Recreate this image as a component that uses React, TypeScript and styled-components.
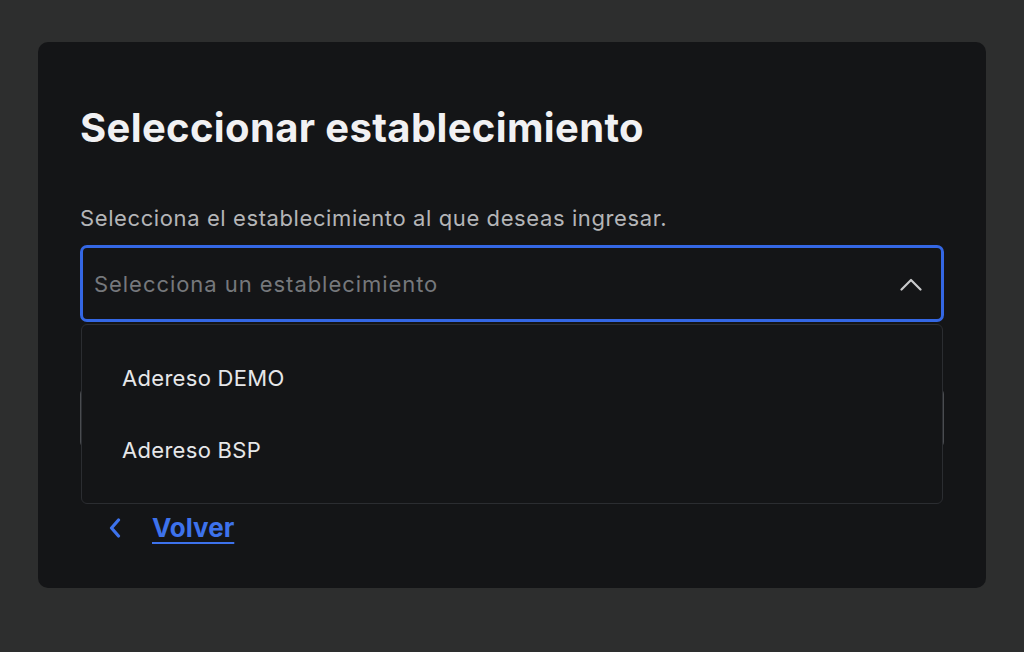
import React, { useState } from 'react'
import styled, { createGlobalStyle } from 'styled-components'

const GlobalStyle = createGlobalStyle`
  html, body {
    margin: 0;
    padding: 0;
    background: #2d2e2e;
    font-family: Inter, 'Noto Sans', sans-serif;
  }
`

const Page = styled.div`
  width: 1024px;
  height: 652px;
  box-sizing: border-box;
  padding: 42px 38px 0 38px;
`

const Card = styled.div`
  width: 948px;
  height: 546px;
  box-sizing: border-box;
  background: #141517;
  border-radius: 10px;
  padding: 62px 42px 0 42px;
  display: flex;
  flex-direction: column;
`

const Title = styled.h1`
  margin: 0;
  font-size: 40px;
  line-height: 48px;
  font-weight: 700;
  color: #f1f1f3;
  letter-spacing: 0.35px;
`

const Description = styled.p`
  margin: 52px 0 0 0;
  font-size: 22px;
  line-height: 28px;
  color: #b4b5b8;
  letter-spacing: 0.6px;
`

const SelectWrap = styled.div`
  position: relative;
  margin-top: 13px;
`

const SelectBox = styled.div<{ open: boolean }>`
  height: 77px;
  box-sizing: border-box;
  border: 3px solid ${({ open }) => (open ? '#3467e4' : '#3a3c40')};
  border-radius: 7px;
  display: flex;
  align-items: center;
  justify-content: space-between;
  padding: 0 19px 0 11px;
  cursor: pointer;
`

const Placeholder = styled.span`
  font-size: 22px;
  color: #76787c;
  letter-spacing: 0.95px;
`

const Menu = styled.ul`
  position: absolute;
  top: 79px;
  left: 1px;
  right: 1px;
  margin: 0;
  padding: 17px 0;
  list-style: none;
  background: #141517;
  border: 1px solid #2b2d31;
  border-radius: 6px;
  z-index: 2;
`

const Option = styled.li`
  height: 72px;
  display: flex;
  align-items: center;
  padding-left: 40px;
  font-size: 22px;
  color: #e6e7e9;
  letter-spacing: 0.3px;
`

const ContinueButton = styled.button`
  margin-top: 66px;
  height: 60px;
  width: 100%;
  background: transparent;
  border: 1px solid #4a4c50;
  border-radius: 6px;
  color: #6a6c70;
  font-family: inherit;
  font-size: 20px;
`

const BackLink = styled.a`
  margin-top: 64px;
  display: flex;
  align-items: center;
  gap: 30px;
  padding-left: 28px;
  color: #3d72ec;
  font-size: 26px;
  font-weight: 700;
  text-decoration: none;
  cursor: pointer;

  span {
    text-decoration: underline;
    text-underline-offset: 5px;
    text-decoration-thickness: 2px;
  }
`

const ChevronUp = () => (
  <svg width="22" height="14" viewBox="0 0 22 14" fill="none">
    <path d="M1.5 12.5L11 3L20.5 12.5" stroke="#c9cacc" strokeWidth="2.2" strokeLinecap="round" strokeLinejoin="round" />
  </svg>
)

const ChevronLeft = () => (
  <svg width="14" height="20" viewBox="0 0 14 20" fill="none">
    <path d="M10.5 2L3.5 10L10.5 18" stroke="#3d72ec" strokeWidth="3.2" strokeLinecap="round" strokeLinejoin="round" />
  </svg>
)

const establishments = ['Adereso DEMO', 'Adereso BSP']

const App: React.FC = () => {
  const [open, setOpen] = useState(true)

  return (
    <Page>
      <GlobalStyle />
      <Card>
        <Title>Seleccionar establecimiento</Title>
        <Description>Selecciona el establecimiento al que deseas ingresar.</Description>
        <SelectWrap>
          <SelectBox open={open} onClick={() => setOpen(!open)}>
            <Placeholder>Selecciona un establecimiento</Placeholder>
            <ChevronUp />
          </SelectBox>
          {open && (
            <Menu>
              {establishments.map((name) => (
                <Option key={name}>{name}</Option>
              ))}
            </Menu>
          )}
        </SelectWrap>
        <ContinueButton disabled>Continuar</ContinueButton>
        <BackLink>
          <ChevronLeft />
          <span>Volver</span>
        </BackLink>
      </Card>
    </Page>
  )
}

export default App
